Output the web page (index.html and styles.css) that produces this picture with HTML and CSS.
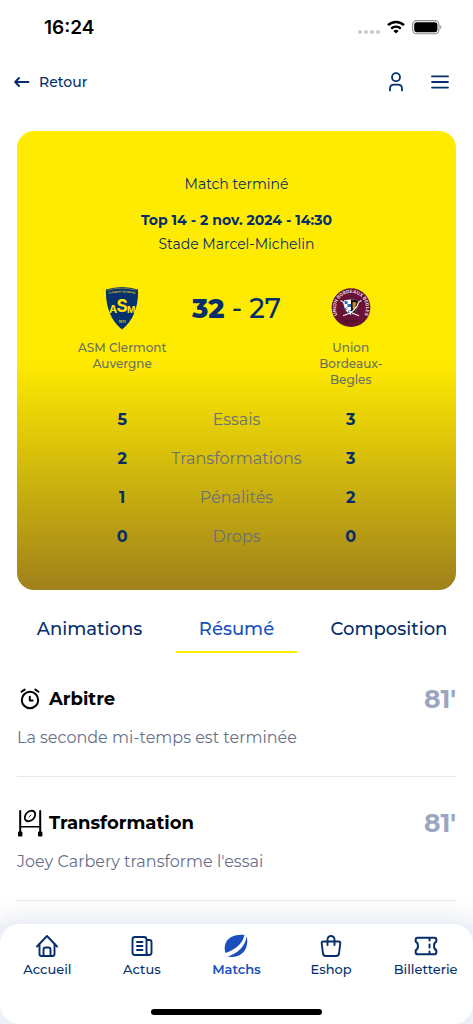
FILE: index.html
```
<!DOCTYPE html>
<html lang="fr">
<head>
  <meta charset="UTF-8">
  <meta name="viewport" content="width=device-width, initial-scale=1.0">
  <title>Match - Résumé</title>
  <link rel="stylesheet" href="styles.css">
</head>
<body>
  <div class="status-bar">
    <span class="clock">16:24</span>
    <div class="status-icons">
      <svg width="22" height="6" viewBox="0 0 22 6" fill="#c9c9c9"><circle cx="2" cy="4" r="2"/><circle cx="8" cy="4" r="2"/><circle cx="14" cy="4" r="2"/><circle cx="20" cy="4" r="2"/></svg>
      <svg width="18" height="14" viewBox="0 0 18 14" fill="none" stroke="#000" stroke-width="2.4"><path d="M1 5.2a11.5 11.5 0 0 1 16 0"/><path d="M4.2 8.6a6.9 6.9 0 0 1 9.6 0"/><path d="M9 13.6l-2.6-2.7a3.8 3.8 0 0 1 5.2 0z" fill="#000" stroke="none"/></svg>
      <svg width="30" height="15" viewBox="0 0 30 15"><rect x=".6" y=".6" width="26.4" height="13.2" rx="4" fill="none" stroke="#8f8f8f" stroke-width="1.1"/><rect x="2.2" y="2.2" width="23.2" height="10" rx="2.6"/><path d="M28.2 5.2c1.6.6 1.6 3.4 0 4z" fill="#8f8f8f"/></svg>
    </div>
  </div>

  <header class="app-bar">
    <a class="back" href="#">
      <svg width="16" height="12" viewBox="0 0 16 12" fill="none" stroke="currentColor" stroke-width="1.9" stroke-linecap="round" stroke-linejoin="round"><path d="M14.5 6H1.5M5 2L1.2 6 5 10"/></svg>
      Retour
    </a>
    <div class="actions">
      <button class="icon-btn" aria-label="Mon compte">
        <svg width="14" height="20" viewBox="0 0 14 20" fill="none" stroke="currentColor" stroke-width="1.8" stroke-linecap="round"><circle cx="7" cy="5.2" r="4"/><path d="M1 18.4v-1.6c0-2.6 1.7-4.2 4.2-4.2h3.6c2.5 0 4.2 1.6 4.2 4.2v1.6"/></svg>
      </button>
      <button class="icon-btn" aria-label="Menu">
        <svg width="18" height="14" viewBox="0 0 18 14" fill="none" stroke="currentColor" stroke-width="1.8" stroke-linecap="round"><path d="M1 1.4h16M1 7h16M1 12.6h16"/></svg>
      </button>
    </div>
  </header>

  <main>
    <section class="match-card">
      <p class="match-state">Match terminé</p>
      <p class="match-date">Top 14 - 2 nov. 2024 - 14:30</p>
      <p class="match-place">Stade Marcel-Michelin</p>

      <div class="teams">
        <div class="team">
          <svg width="34" height="44" viewBox="0 0 34 44">
            <path d="M1 3.5Q17-1.5 33 3.5C33.6 19 29 34 17 43.5 5 34 .4 19 1 3.5z" fill="#06316c"/>
            <path d="M2.3 4.4Q17 0 31.700 4.4" fill="none" stroke="#c3bd20" stroke-width=".5"/>
            <path id="arc-asm" d="M2.600 8.200Q17 4.800 31.400 8.200" fill="none"/>
            <text class="crest-text" font-size="2.3" fill="#e4d718" text-anchor="middle"><textPath href="#arc-asm" startOffset="50%">CLERMONT AUVERGNE</textPath></text>
            <text class="crest-text" font-size="11" fill="#ffe700" x="8.200" y="27" text-anchor="middle">A</text>
            <text class="crest-text" font-size="17" fill="#ffe700" x="17" y="26" text-anchor="middle">S</text>
            <text class="crest-text" font-size="9" fill="#ffe700" x="26.200" y="27" text-anchor="middle">M</text>
            <text class="crest-text" font-size="3.600" fill="#d3c81c" x="17" y="36.500" text-anchor="middle">1911</text>
          </svg>
          <p class="team-name">ASM Clermont Auvergne</p>
        </div>
        <p class="score"><strong>32</strong> - 27</p>
        <div class="team">
          <svg width="40" height="44" viewBox="0 0 40 44">
            <circle cx="20" cy="21.600" r="19.400" fill="#681235"/>
            <path id="arc-ubb" d="M8.300 31.400A15 15 0 1 1 31.700 31.400" fill="none"/>
            <text class="crest-text" font-size="4.600" fill="#e9d9dd" text-anchor="middle"><textPath href="#arc-ubb" startOffset="50%">UNION BORDEAUX BEGLES</textPath></text>
            <path d="M13 14.500q7-2.200 14 0c1.200 6-1.500 11.500-7 14.500-5.500-3-8.200-8.500-7-14.500z" fill="#fff"/>
            <path d="M20 13.400q3.800 0 7 1.100c1.200 6-1.500 11.500-7 14.500z" fill="#17141c"/>
            <path d="M13.500 15h3v3h-3zM16.500 18h3.500v3h-3.500zM13.500 21h3v3h-3zM17 24h3v3h-3z" fill="#2b6cb8"/>
            <path d="M21.500 16.500l3-.5.8 2-1 1.500 1 2-2 2.500-1.500-1.500z" fill="#dc8a1c"/>
            <path d="M9.500 14.500l3 1.800C14 23 19 27 28 29.800M30.500 14.500l-3 1.800C26 23 21 27 12 29.800" fill="none" stroke="#f7f0f0" stroke-width="1.200"/>
            <text class="crest-text" font-size="4" fill="#471027" x="20" y="37" text-anchor="middle">RUGBY</text>
          </svg>
          <p class="team-name">Union Bordeaux-Begles</p>
        </div>
      </div>

      <table class="stats">
        <tr><td>5</td><th scope="row">Essais</th><td>3</td></tr>
        <tr><td>2</td><th scope="row">Transformations</th><td>3</td></tr>
        <tr><td>1</td><th scope="row">Pénalités</th><td>2</td></tr>
        <tr><td>0</td><th scope="row">Drops</th><td>0</td></tr>
      </table>
    </section>

    <nav class="tabs">
      <a class="tab" href="#">Animations</a>
      <a class="tab active" href="#">Résumé</a>
      <a class="tab" href="#">Composition</a>
    </nav>

    <section class="events">
      <article class="event">
        <div class="event-head">
          <svg width="26" height="26" viewBox="0 0 26 26" fill="none" stroke="#000" stroke-width="2" stroke-linecap="round"><circle cx="13" cy="14" r="8.200"/><path d="M4.500 5.800l3.200-2.200M21.500 5.800l-3.200-2.200"/><path d="M12.800 10.800v3.800h2.800" stroke-linejoin="round"/></svg>
          <h2>Arbitre</h2>
          <span class="minute">81'</span>
        </div>
        <p>La seconde mi-temps est terminée</p>
      </article>
      <article class="event">
        <div class="event-head">
          <svg width="26" height="28" viewBox="0 0 26 28" fill="none" stroke="#000" stroke-width="2" stroke-linecap="round"><path d="M3.200 2v21M23.200 2v21"/><path d="M3.200 17.800h20" stroke-width="1.600"/><ellipse cx="13" cy="7" rx="6" ry="4.400" transform="rotate(-45 13 7)" stroke-width="1.800"/><path d="M12 8l2-2" stroke-width=".8"/><path d="M2 23.500h2.400v3H2zM22 23.500h2.400v3H22z" fill="#000" stroke-linejoin="round"/></svg>
          <h2>Transformation</h2>
          <span class="minute">81'</span>
        </div>
        <p>Joey Carbery transforme l'essai</p>
      </article>
    </section>
  </main>

  <footer class="bottom">
    <nav class="bottom-nav">
      <div class="nav-items">
        <a class="nav-item" href="#">
          <svg width="24" height="24" viewBox="0 0 24 24" fill="none" stroke="currentColor" stroke-width="1.900" stroke-linecap="round" stroke-linejoin="round"><path d="M2 12.500L12 2l10 10.500"/><path d="M4.500 10.500V20q0 2 2 2h11q2 0 2-2v-9.500"/><path d="M8.500 21.500v-6q0-2 2-2h3q2 0 2 2v6"/></svg>
          Accueil
        </a>
        <a class="nav-item" href="#">
          <svg width="24" height="24" viewBox="0 0 24 24" fill="none" stroke="currentColor" stroke-width="1.900" stroke-linecap="round" stroke-linejoin="round"><path d="M19 21H5q-2.500 0-2.500-2.500v-13Q2.500 3 5 3h9q2.500 0 2.500 2.500v13q0 2.500 2.500 2.500t2.500-2.500V8q0-2-2-2h-3"/><path d="M7 8h5.500M7 12h5.500M7 16h5.500"/></svg>
          Actus
        </a>
        <a class="nav-item active" href="#">
          <svg width="24" height="24" viewBox="0 0 24 24" fill="currentColor"><path d="M20.500.9C11 .2 2.500 3 .8 12.200c-.3 2 0 4.600.6 6.800C11 15.500 18.500 10 20.500.9z"/><path d="M22.600 2.200C21.500 12 13.500 19.500 3.500 22.600 13.500 24.200 21 20 22.900 11c.6-3 .4-6-.3-8.800z"/></svg>
          Matchs
        </a>
        <a class="nav-item" href="#">
          <svg width="24" height="24" viewBox="0 0 24 24" fill="none" stroke="currentColor" stroke-width="1.900" stroke-linecap="round" stroke-linejoin="round"><path d="M4.500 7.500h15q2 0 1.800 2l-1.300 10q-.4 2.500-2.800 2.500H6.800q-2.400 0-2.800-2.500l-1.300-10q-.2-2 1.800-2z"/><path d="M8.500 11V5.500a3.500 3.500 0 0 1 7 0V11"/></svg>
          Eshop
        </a>
        <a class="nav-item" href="#">
          <svg width="24" height="24" viewBox="0 0 24 24" fill="none" stroke="currentColor" stroke-width="2" stroke-linecap="round" stroke-linejoin="round"><path d="M3.500 3.800h17q1.800 0 1.800 1.800v2.200c-3 1-3 7.400 0 8.400v2.200q0 1.800-1.800 1.800h-17q-1.800 0-1.800-1.800v-2.200c3-1 3-7.400 0-8.400V5.600q0-1.800 1.800-1.800z"/><path d="M15.500 4v2.500M15.500 10.500v3M15.500 17.500V20"/></svg>
          Billetterie
        </a>
      </div>
      <div class="home-indicator"></div>
    </nav>
  </footer>
</body>
</html>
```
FILE: styles.css
```
* {
  box-sizing: border-box;
}

body {
  margin: 0;
  min-height: 100vh;
  display: flex;
  flex-direction: column;
  font-family: 'Montserrat', 'Inter', sans-serif;
  background: #fff;
  color: #052e6b;
}

h2,
p {
  margin: 0;
}

a {
  color: inherit;
  text-decoration: none;
}

svg {
  display: block;
  flex-shrink: 0;
}

.status-bar {
  display: flex;
  align-items: center;
  justify-content: space-between;
  height: 54px;
  padding: 0 31px 0 44px;
}

.clock {
  font-family: 'Inter', sans-serif;
  font-size: 19px;
  font-weight: 600;
  color: #000;
}

.status-icons {
  display: flex;
  align-items: center;
  gap: 7px;
}

.status-icons svg:first-child {
  margin-top: 8px;
}

.app-bar {
  display: flex;
  align-items: center;
  justify-content: space-between;
  height: 56px;
  padding: 0 21px 0 14px;
}

.back {
  display: flex;
  align-items: center;
  gap: 9px;
  font-size: 14px;
  font-weight: 500;
}

.actions {
  display: flex;
  align-items: center;
  gap: 20px;
}

.icon-btn {
  display: flex;
  align-items: center;
  justify-content: center;
  width: 24px;
  height: 24px;
  padding: 0;
  border: none;
  background: none;
  color: #052e6b;
  cursor: pointer;
}

main {
  padding: 21px 17px 0;
}

.match-card {
  padding: 43px 59px 34px;
  border-radius: 17px;
  background: linear-gradient(180deg, #ffeb00 0%, #ffeb00 50%, #9f811b 100%);
  text-align: center;
}

.match-state {
  margin-bottom: 14px;
  font-size: 14px;
  line-height: 20px;
}

.match-date,
.match-place {
  font-size: 14px;
  line-height: 24px;
}

.match-date {
  font-weight: 700;
}

.teams {
  display: grid;
  grid-template-columns: minmax(0, 1fr) 136px minmax(0, 1fr);
  margin-top: 30px;
}

.team {
  display: flex;
  flex-direction: column;
  align-items: center;
  gap: 10px;
}

.team-name {
  font-size: 12px;
  font-weight: 500;
  line-height: 16px;
  color: #6b705c;
}

.crest-text {
  font-family: 'Inter', sans-serif;
  font-weight: 700;
}

.score {
  font-size: 27px;
  font-weight: 500;
  line-height: 46px;
}

.score strong {
  font-weight: 800;
}

.stats {
  width: 100%;
  margin-top: 12px;
  table-layout: fixed;
  border-collapse: collapse;
  line-height: 39px;
}

.stats td,
.stats th {
  padding: 0;
  font-size: 16px;
}

.stats td {
  font-weight: 700;
}

.stats th {
  width: 136px;
  font-weight: 400;
  color: #6b7078;
}

.tabs {
  display: grid;
  grid-template-columns: 153fr 121fr 164fr;
  gap: 10px;
  margin: 13px -15px 0 -4px;
}

.tab {
  padding-top: 4px;
  border-bottom: 2px solid transparent;
  font-size: 18px;
  font-weight: 500;
  line-height: 44px;
  text-align: center;
}

.tab.active {
  border-bottom-color: #ffe900;
  color: #1a50bd;
}

.event {
  padding: 30px 0 26px;
  border-bottom: 1px solid #e4e7ef;
}

.event-head {
  display: flex;
  align-items: center;
  gap: 6px;
  height: 31px;
}

.event h2 {
  font-size: 18px;
  font-weight: 700;
  color: #000;
}

.minute {
  margin-left: auto;
  font-size: 25px;
  font-weight: 700;
  color: #9ba5c1;
}

.event p {
  margin-top: 12px;
  font-size: 16px;
  line-height: 24px;
  color: #66708a;
}

.bottom {
  margin-top: auto;
  background: #edf0f9;
  box-shadow: 0 0 28px rgba(5, 46, 107, 0.17);
}

.bottom-nav {
  display: flex;
  flex-direction: column;
  align-items: center;
  justify-content: space-between;
  height: 100px;
  padding: 10px 0 9px;
  border-radius: 20px;
  background: #fff;
}

.nav-items {
  display: grid;
  grid-template-columns: repeat(5, 1fr);
  width: 100%;
}

.nav-item {
  display: flex;
  flex-direction: column;
  align-items: center;
  font-size: 13px;
  font-weight: 500;
  line-height: 22px;
}

.nav-item.active {
  font-weight: 600;
  color: #1a50bd;
}

.home-indicator {
  width: 36%;
  height: 6px;
  border-radius: 3px;
  background: #000;
}
```
